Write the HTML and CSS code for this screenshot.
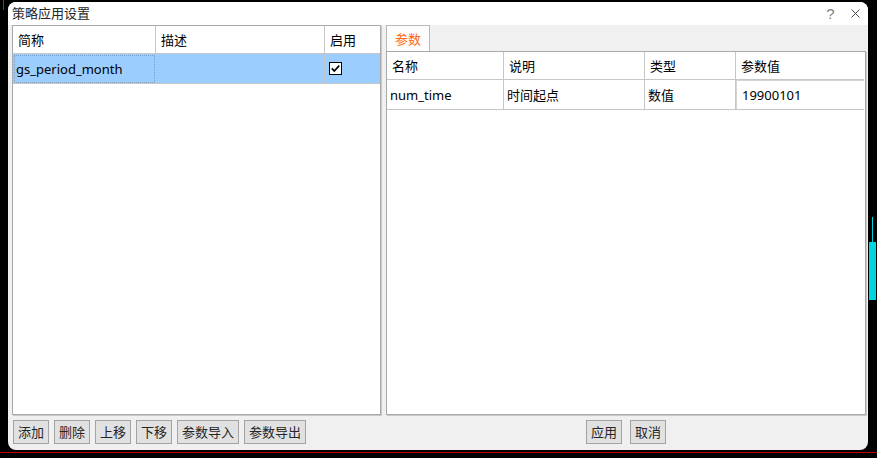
FILE: index.html
```html
<!DOCTYPE html>
<html lang="zh">
<head>
<meta charset="utf-8">
<title>策略应用设置</title>
<link rel="stylesheet" href="styles.css">
</head>
<body>
<div class="deco deco-red-v"></div>
<div class="deco deco-red-h"></div>
<div class="deco deco-cyan-line"></div>
<div class="deco deco-cyan-bar"></div>
<div class="desk">
  <div class="dialog">
    <div class="titlebar">
      <div class="title">策略应用设置</div>
      <div class="tb-btn help">?</div>
      <div class="tb-btn close">
        <svg width="9" height="9" viewBox="0 0 9 9"><path d="M0.5 0.5 L8.5 8.5 M8.5 0.5 L0.5 8.5" stroke="#333" stroke-width="0.9" fill="none"/></svg>
      </div>
    </div>
    <div class="main">
      <div class="table left-table">
        <div class="row head">
          <div class="cell lc1">简称</div>
          <div class="cell lc2">描述</div>
          <div class="cell lc3">启用</div>
        </div>
        <div class="row data selected">
          <div class="cell lc1 focus">gs_period_month</div>
          <div class="cell lc2"></div>
          <div class="cell lc3 check-cell">
            <svg width="13" height="13" viewBox="0 0 13 13"><rect x="0.5" y="0.5" width="12" height="12" fill="#fff" stroke="#000"/><path d="M2.8 6.4 L5.3 9 L10.2 3.6" stroke="#000" stroke-width="1.7" fill="none"/></svg>
          </div>
        </div>
      </div>
      <div class="right-panel">
        <div class="tabs"><div class="tab">参数</div></div>
        <div class="table right-table">
          <div class="row head">
            <div class="cell rc1">名称</div>
            <div class="cell rc2">说明</div>
            <div class="cell rc3">类型</div>
            <div class="cell rc4">参数值</div>
          </div>
          <div class="row data">
            <div class="cell rc1">num_time</div>
            <div class="cell rc2">时间起点</div>
            <div class="cell rc3">数值</div>
            <div class="cell rc4 editor-cell"><div class="editor">19900101</div></div>
          </div>
        </div>
      </div>
      <div class="btns left-btns">
        <button class="btn">添加</button>
        <button class="btn">删除</button>
        <button class="btn">上移</button>
        <button class="btn">下移</button>
        <button class="btn">参数导入</button>
        <button class="btn">参数导出</button>
      </div>
      <div class="btns right-btns">
        <button class="btn">应用</button>
        <button class="btn">取消</button>
      </div>
    </div>
  </div>
</div>
</body>
</html>
```

FILE: styles.css
```css
* { box-sizing: border-box; }
html, body { margin: 0; padding: 0; }
body {
  width: 877px;
  height: 458px;
  overflow: hidden;
  position: relative;
  background: #000;
  font-family: "Noto Sans", "Noto Sans CJK SC", sans-serif;
  font-size: 13px;
  color: #000;
}

.deco { position: absolute; }
.deco-red-v { left: 3px; top: 0; width: 1px; height: 10px; background: #d01010; }
.deco-red-h { left: 0; top: 452px; width: 877px; height: 1px; background: #c00000; }
.deco-cyan-line { left: 872px; top: 217px; width: 1px; height: 26px; background: #00d0d8; }
.deco-cyan-bar { left: 869px; top: 242px; width: 7px; height: 58px; background: #00d4dc; }

.desk { padding: 2px 0 0 8px; }

.dialog {
  width: 860px;
  height: 448px;
  background: #f0f0f0;
  border-radius: 8px;
  overflow: hidden;
  display: flex;
  flex-direction: column;
  position: relative;
}

.titlebar {
  height: 23px;
  background: #fff;
  display: flex;
  align-items: center;
  padding-left: 4px;
}
.title { flex: 1; color: #262626; line-height: 23px; }
.tb-btn {
  width: 25px;
  height: 23px;
  display: flex;
  align-items: center;
  justify-content: center;
}
.help { color: #808080; font-size: 15px; font-family: "Liberation Sans", sans-serif; padding-bottom: 1px; }

.main {
  flex: 1;
  display: grid;
  grid-template-columns: 369px 480px;
  grid-template-rows: 390px 24px;
  column-gap: 5px;
  row-gap: 5px;
  padding: 0 2px 0 4px;
}

.table {
  background: #fff;
  border: 1px solid #a9a9a9;
  box-shadow: 1px 1px 0 #c9c9c9;
}

.row { display: flex; }
.cell {
  border-right: 1px solid #c6c6c6;
  border-bottom: 1px solid #c6c6c6;
  display: flex;
  align-items: center;
  white-space: nowrap;
  overflow: hidden;
}
.row.head .cell { height: 28px; padding-left: 5px; }
.row.data .cell { height: 30px; padding-left: 3px; }

.lc1 { width: 143px; }
.lc2 { width: 169px; }
.lc3 { width: 55px; border-right: none; }

.selected .cell { background: #9ccdff; }
.row.data .focus { outline: 1px dotted #7a9fc4; outline-offset: -2px; }
.row.data .check-cell { padding-left: 4px; }
.check-cell svg { display: block; }

.right-panel { display: flex; flex-direction: column; }
.tabs { height: 26px; display: flex; }
.tab {
  width: 44px;
  height: 26px;
  background: #fdfdfd;
  border: 1px solid #b9b9b9;
  border-bottom: none;
  color: #ff6a10;
  display: flex;
  align-items: center;
  justify-content: center;
}
.right-table { flex: 1; }

.rc1 { width: 117px; }
.rc2 { width: 141px; }
.rc3 { width: 91px; }
.rc4 { width: 128px; border-right: none; }

.row.data .editor-cell { padding: 0; align-items: stretch; }
.editor {
  flex: 1;
  display: flex;
  align-items: center;
  padding-left: 5px;
  border-top: 1px solid #d4d4d4;
  border-left: 1px solid #d4d4d4;
  background: #fff;
}

.btns { display: flex; align-items: stretch; }
.left-btns { gap: 5px; padding-left: 1px; }
.right-btns { gap: 8px; justify-content: center; }

.btn {
  height: 24px;
  margin: 0;
  padding: 0 4px;
  font-family: "Noto Sans", "Noto Sans CJK SC", sans-serif;
  font-size: 13px;
  color: #262626;
  background: #e1e1e1;
  border: 1px solid #a3a3a3;
  border-radius: 0;
  line-height: 22px;
}
```
